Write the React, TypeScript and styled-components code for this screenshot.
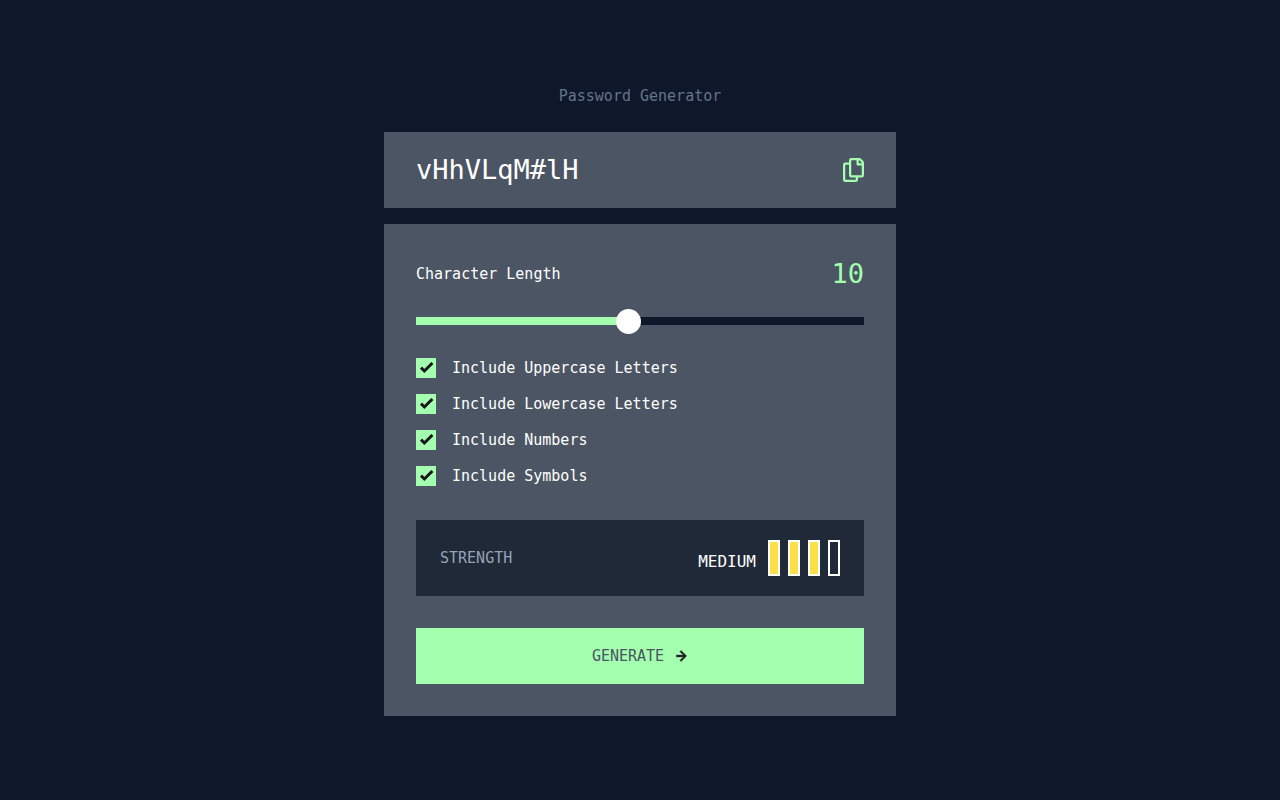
import { useState } from "react";
import styled, { createGlobalStyle } from "styled-components";

const color = {
  page: "#0f172a",
  panel: "#4b5563",
  well: "#1f2937",
  accent: "#a4ffaf",
  muted: "#64748b",
  label: "#94a3b8",
  yellow: "#fde047",
};

const GlobalStyle = createGlobalStyle`
  *, *::before, *::after { box-sizing: border-box; }
  body {
    margin: 0;
    background: ${color.page};
    color: #fff;
    font: 15px/24px "DejaVu Sans Mono", monospace;
  }
  button, input { font: inherit; }
`;

const Page = styled.main`
  min-height: 100vh;
  display: flex;
  align-items: center;
  justify-content: center;
`;

const Generator = styled.div`
  width: 100%;
  max-width: 512px;
`;

const Title = styled.h1`
  margin: 0 0 24px;
  color: ${color.muted};
  font-size: 15px;
  font-weight: 400;
  text-align: center;
`;

const PasswordPanel = styled.section`
  display: flex;
  align-items: center;
  justify-content: space-between;
  margin-bottom: 16px;
  padding: 20px 32px;
  background: ${color.panel};
`;

const Password = styled.output`
  font-size: 27px;
  line-height: 36px;
`;

const CopyButton = styled.button`
  display: flex;
  padding: 0;
  border: 0;
  background: none;
  color: ${color.accent};
  cursor: pointer;
`;

const Settings = styled.form`
  padding: 32px;
  background: ${color.panel};
`;

const LengthRow = styled.div`
  display: flex;
  align-items: center;
  justify-content: space-between;
  margin-bottom: 16px;
`;

const LengthValue = styled.output`
  color: ${color.accent};
  font-size: 27px;
  line-height: 36px;
`;

const Slider = styled.input<{ $fill: number }>`
  appearance: none;
  display: block;
  width: 100%;
  height: 26px;
  margin: 0 0 24px;
  background: linear-gradient(
      to right,
      ${color.accent} ${(p) => p.$fill}%,
      ${color.page} ${(p) => p.$fill}%
    )
    center / 100% 8px no-repeat;
  cursor: pointer;

  &::-webkit-slider-thumb {
    appearance: none;
    width: 25px;
    height: 25px;
    border-radius: 50%;
    background: #fff;
  }
`;

const Options = styled.div`
  display: grid;
  gap: 16px;
  margin-bottom: 34px;
`;

const Option = styled.label`
  display: flex;
  align-items: center;
  gap: 16px;
  line-height: 20px;
  cursor: pointer;
`;

const TickBox = styled.span`
  display: grid;
  width: 20px;
  height: 20px;

  > * {
    grid-area: 1 / 1;
    place-self: center;
  }

  svg {
    pointer-events: none;
  }
`;

const Tick = styled.input`
  appearance: none;
  width: 20px;
  height: 20px;
  margin: 0;
  border: 2px solid #fff;

  &:checked {
    border-color: ${color.accent};
    background: ${color.accent};
  }

  &:not(:checked) + svg {
    display: none;
  }
`;

const Strength = styled.div`
  display: flex;
  align-items: center;
  justify-content: space-between;
  margin-bottom: 32px;
  padding: 20px 24px;
  background: ${color.well};
`;

const StrengthLabel = styled.span`
  color: ${color.label};
`;

const Meter = styled.div`
  display: flex;
  align-items: flex-end;
  gap: 8px;
`;

const Level = styled.span`
  margin-right: 4px;
  font-size: 16px;
  line-height: 28px;
`;

const Bar = styled.span<{ $on: boolean }>`
  width: 12px;
  height: 36px;
  border: 2px solid #fff;
  background: ${(p) => (p.$on ? color.yellow : "transparent")};
`;

const GenerateButton = styled.button`
  display: flex;
  align-items: center;
  justify-content: center;
  gap: 12px;
  width: 100%;
  height: 56px;
  padding: 0;
  border: 0;
  background: ${color.accent};
  color: ${color.panel};
  cursor: pointer;
`;

const CopyIcon = () => (
  <svg width="21" height="24" viewBox="0 0 21 24" aria-hidden="true">
    <path
      fill="currentColor"
      d="M20.341 3.091 17.909.659A2.25 2.25 0 0 0 16.319 0H8.25A2.25 2.25 0 0 0 6 2.25V4.5H2.25A2.25 2.25 0 0 0 0 6.75v15A2.25 2.25 0 0 0 2.25 24h10.5A2.25 2.25 0 0 0 15 21.75V19.5h3.75A2.25 2.25 0 0 0 21 17.25V4.682a2.25 2.25 0 0 0-.659-1.591ZM12.469 21.75H2.53a.281.281 0 0 1-.281-.281V7.03a.281.281 0 0 1 .281-.281H6v10.5a2.25 2.25 0 0 0 2.25 2.25h4.5v1.969a.282.282 0 0 1-.281.281Zm6-4.5H8.53a.281.281 0 0 1-.281-.281V2.53a.281.281 0 0 1 .281-.281H13.5v4.125c0 .621.504 1.125 1.125 1.125h4.125v9.469a.282.282 0 0 1-.281.281Zm.281-12h-3v-3h.451c.075 0 .147.03.2.082L18.667 4.8a.281.281 0 0 1 .082.199v.251Z"
    />
  </svg>
);

const CheckIcon = () => (
  <svg width="16" height="12" viewBox="-2 0 16 12" aria-hidden="true">
    <path d="M1 5.607 4.393 9l8-8" fill="none" stroke="#18171f" strokeWidth="3" />
  </svg>
);

const ArrowIcon = () => (
  <svg width="12" height="12" viewBox="0 0 12 12" aria-hidden="true">
    <path
      fill="#24232c"
      stroke="#24232c"
      strokeWidth="0.4"
      d="m5.106 11.6 5.6-5.6-5.6-5.6-1.265 1.265 3.441 3.44H.201v1.79h7.081l-3.441 3.44z"
    />
  </svg>
);

const sets = [
  { name: "Uppercase Letters", chars: "ABCDEFGHIJKLMNOPQRSTUVWXYZ" },
  { name: "Lowercase Letters", chars: "abcdefghijklmnopqrstuvwxyz" },
  { name: "Numbers", chars: "0123456789" },
  { name: "Symbols", chars: "!@#$%^&*()" },
];

const MIN = 1;
const MAX = 20;

export default function App() {
  const [password, setPassword] = useState("vHhVLqM#lH");
  const [length, setLength] = useState(10);
  const [enabled, setEnabled] = useState([true, true, true, true]);

  const score = length < 5 ? 1 : length < 8 ? 2 : length < 13 ? 3 : 4;
  const level = ["TOO WEAK!", "WEAK", "MEDIUM", "STRONG"][score - 1];

  const generate = () => {
    const pool = sets.filter((_, i) => enabled[i]).map((s) => s.chars).join("");
    if (!pool) return;
    setPassword(
      Array.from({ length }, () => pool[Math.floor(Math.random() * pool.length)]).join(""),
    );
  };

  return (
    <Page>
      <GlobalStyle />
      <Generator>
        <Title>Password Generator</Title>
        <PasswordPanel>
          <Password>{password}</Password>
          <CopyButton
            type="button"
            aria-label="Copy password"
            onClick={() => navigator.clipboard?.writeText(password)}
          >
            <CopyIcon />
          </CopyButton>
        </PasswordPanel>
        <Settings
          onSubmit={(e) => {
            e.preventDefault();
            generate();
          }}
        >
          <LengthRow>
            <label htmlFor="length">Character Length</label>
            <LengthValue htmlFor="length">{length}</LengthValue>
          </LengthRow>
          <Slider
            id="length"
            type="range"
            min={MIN}
            max={MAX}
            value={length}
            $fill={((length - MIN) / (MAX - MIN)) * 100}
            onChange={(e) => setLength(Number(e.target.value))}
          />
          <Options>
            {sets.map((set, i) => (
              <Option key={set.name}>
                <TickBox>
                  <Tick
                    type="checkbox"
                    checked={enabled[i]}
                    onChange={() => setEnabled(enabled.map((on, j) => (j === i ? !on : on)))}
                  />
                  <CheckIcon />
                </TickBox>
                Include {set.name}
              </Option>
            ))}
          </Options>
          <Strength>
            <StrengthLabel>STRENGTH</StrengthLabel>
            <Meter>
              <Level>{level}</Level>
              {[1, 2, 3, 4].map((n) => (
                <Bar key={n} $on={n <= score} />
              ))}
            </Meter>
          </Strength>
          <GenerateButton type="submit">
            GENERATE
            <ArrowIcon />
          </GenerateButton>
        </Settings>
      </Generator>
    </Page>
  );
}
